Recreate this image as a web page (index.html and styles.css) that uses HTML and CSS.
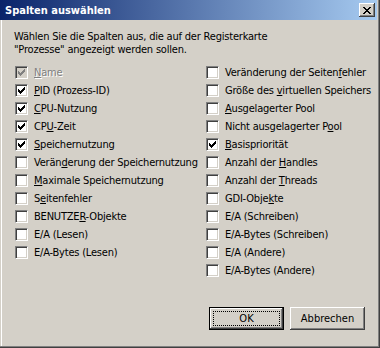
FILE: index.html
```html
<!DOCTYPE html>
<html lang="de">
<head>
    <meta charset="UTF-8">
    <title>Spalten auswählen</title>
    <link rel="stylesheet" href="styles.css">
</head>
<body>
    <div class="window">
        <div class="titlebar">
            <span class="title">Spalten auswählen</span>
            <span class="close">
                <svg width="8" height="7" viewBox="0 0 8 7" shape-rendering="crispEdges">
                    <path d="M0 0h2v1h-2z M6 0h2v1h-2z M1 1h2v1h-2z M5 1h2v1h-2z M2 2h4v1h-4z M3 3h2v1h-2z M2 4h4v1h-4z M1 5h2v1h-2z M5 5h2v1h-2z M0 6h2v1h-2z M6 6h2v1h-2z" fill="#000"/>
                </svg>
            </span>
        </div>

        <p class="intro">Wählen Sie die Spalten aus, die auf der Registerkarte<br>"Prozesse" angezeigt werden sollen.</p>

        <div class="columns">
            <!-- left column -->
            <div class="col">
                <label class="item disabled"><span class="box checked"><svg width="7" height="7" viewBox="0 0 7 7" shape-rendering="crispEdges"><path d="M0 2h1v3h-1z M1 3h1v3h-1z M2 4h1v3h-1z M3 3h1v3h-1z M4 2h1v3h-1z M5 1h1v3h-1z M6 0h1v3h-1z"/></svg></span><span class="text"><u>N</u>ame</span></label>
                <label class="item"><span class="box checked"><svg width="7" height="7" viewBox="0 0 7 7" shape-rendering="crispEdges"><path d="M0 2h1v3h-1z M1 3h1v3h-1z M2 4h1v3h-1z M3 3h1v3h-1z M4 2h1v3h-1z M5 1h1v3h-1z M6 0h1v3h-1z"/></svg></span><span class="text"><u>P</u>ID (Prozess-ID)</span></label>
                <label class="item"><span class="box checked"><svg width="7" height="7" viewBox="0 0 7 7" shape-rendering="crispEdges"><path d="M0 2h1v3h-1z M1 3h1v3h-1z M2 4h1v3h-1z M3 3h1v3h-1z M4 2h1v3h-1z M5 1h1v3h-1z M6 0h1v3h-1z"/></svg></span><span class="text"><u>C</u>PU-Nutzung</span></label>
                <label class="item"><span class="box checked"><svg width="7" height="7" viewBox="0 0 7 7" shape-rendering="crispEdges"><path d="M0 2h1v3h-1z M1 3h1v3h-1z M2 4h1v3h-1z M3 3h1v3h-1z M4 2h1v3h-1z M5 1h1v3h-1z M6 0h1v3h-1z"/></svg></span><span class="text">CP<u>U</u>-Zeit</span></label>
                <label class="item"><span class="box checked"><svg width="7" height="7" viewBox="0 0 7 7" shape-rendering="crispEdges"><path d="M0 2h1v3h-1z M1 3h1v3h-1z M2 4h1v3h-1z M3 3h1v3h-1z M4 2h1v3h-1z M5 1h1v3h-1z M6 0h1v3h-1z"/></svg></span><span class="text"><u>S</u>peichernutzung</span></label>
                <label class="item"><span class="box"></span><span class="text">Verän<u>d</u>erung der Speichernutzung</span></label>
                <label class="item"><span class="box"></span><span class="text"><u>M</u>aximale Speichernutzung</span></label>
                <label class="item"><span class="box"></span><span class="text">S<u>e</u>itenfehler</span></label>
                <label class="item"><span class="box"></span><span class="text">BENUTZE<u>R</u>-Objekte</span></label>
                <label class="item"><span class="box"></span><span class="text">E/A (Lesen)</span></label>
                <label class="item"><span class="box"></span><span class="text">E/A-Bytes (Lesen)</span></label>
            </div>

            <!-- right column -->
            <div class="col">
                <label class="item"><span class="box"></span><span class="text">Veränderung der Seiten<u>f</u>ehler</span></label>
                <label class="item"><span class="box"></span><span class="text">Größe des <u>v</u>irtuellen Speichers</span></label>
                <label class="item"><span class="box"></span><span class="text"><u>A</u>usgelagerter Pool</span></label>
                <label class="item"><span class="box"></span><span class="text">Nicht ausgelagerter P<u>o</u>ol</span></label>
                <label class="item"><span class="box checked"><svg width="7" height="7" viewBox="0 0 7 7" shape-rendering="crispEdges"><path d="M0 2h1v3h-1z M1 3h1v3h-1z M2 4h1v3h-1z M3 3h1v3h-1z M4 2h1v3h-1z M5 1h1v3h-1z M6 0h1v3h-1z"/></svg></span><span class="text"><u>B</u>asispriorität</span></label>
                <label class="item"><span class="box"></span><span class="text">Anzahl der <u>H</u>andles</span></label>
                <label class="item"><span class="box"></span><span class="text">Anzahl der <u>T</u>hreads</span></label>
                <label class="item"><span class="box"></span><span class="text">GDI-Obje<u>k</u>te</span></label>
                <label class="item"><span class="box"></span><span class="text">E/A (Schreiben)</span></label>
                <label class="item"><span class="box"></span><span class="text">E/A-Bytes (Schreiben)</span></label>
                <label class="item"><span class="box"></span><span class="text">E/A (Andere)</span></label>
                <label class="item"><span class="box"></span><span class="text">E/A-Bytes (Andere)</span></label>
            </div>
        </div>

        <div class="buttons">
            <button class="btn default"><span class="focus">OK</span></button>
            <button class="btn">Abbrechen</button>
        </div>
    </div>
</body>
</html>
```

FILE: styles.css
```css
body {
    margin: 0;
    font-family: "DejaVu Sans Condensed", "DejaVu Sans", sans-serif;
    font-stretch: condensed;
    font-size: 11px;
    letter-spacing: -0.2px;
    color: #000;
    background: #d4d0c8;
}
.window {
    width: 380px;
    height: 348px;
    box-sizing: border-box;
    background: #d4d0c8;
    box-shadow: inset -1px -1px #404040, inset -2px -2px #808080, inset 1px 0 #d4d0c8, inset 2px 0 #fff;
    overflow: hidden;
}
.titlebar {
    height: 20px;
    margin-right: 3px;
    display: flex;
    align-items: center;
    justify-content: space-between;
    padding-left: 5px;
    padding-right: 2px;
    background: linear-gradient(to right, #0a246a, #a6caf0);
}
.title {
    color: #fff;
    font-weight: bold;
    font-size: 11px;
    font-stretch: normal;
    letter-spacing: 0;
}
.close {
    width: 16px;
    height: 14px;
    box-sizing: border-box;
    display: flex;
    align-items: center;
    justify-content: center;
    background: #d4d0c8;
    box-shadow: inset -1px -1px #404040, inset 1px 1px #fff, inset -2px -2px #808080;
}
.intro {
    margin: 10px 0 0;
    padding-left: 14px;
    line-height: 13px;
}
.columns {
    display: flex;
    margin-top: 7px;
    padding-left: 15px;
}
.col {
    display: flex;
    flex-direction: column;
}
.col:first-child {
    width: 191px;
}
.item {
    height: 18px;
    display: flex;
    align-items: center;
    gap: 6px;
    white-space: nowrap;
}
.box {
    width: 13px;
    height: 13px;
    box-sizing: border-box;
    flex: none;
    background: #fff;
    border: 1px solid;
    border-color: #808080 #fff #fff #808080;
    box-shadow: inset 1px 1px #404040, inset -1px -1px #d4d0c8;
    padding: 2px 0 0 2px;
}
.box svg {
    display: block;
    fill: #000;
}
.disabled .box {
    background: #d4d0c8;
}
.disabled .box svg {
    fill: #808080;
}
.disabled .text {
    color: #808080;
    text-shadow: 1px 1px #fff;
}
.buttons {
    display: flex;
    justify-content: flex-end;
    gap: 6px;
    margin-top: 28px;
    padding-right: 15px;
}
.btn {
    width: 75px;
    height: 23px;
    box-sizing: border-box;
    padding: 0;
    border: none;
    font: inherit;
    color: #000;
    background: #d4d0c8;
    box-shadow: inset -1px -1px #404040, inset 1px 1px #fff, inset -2px -2px #808080, inset 2px 2px #d4d0c8;
}
.btn.default {
    border: 1px solid #000;
    padding: 3px;
}
.focus {
    display: flex;
    align-items: center;
    justify-content: center;
    height: 100%;
    box-sizing: border-box;
    border: 1px dotted #000;
}
```
